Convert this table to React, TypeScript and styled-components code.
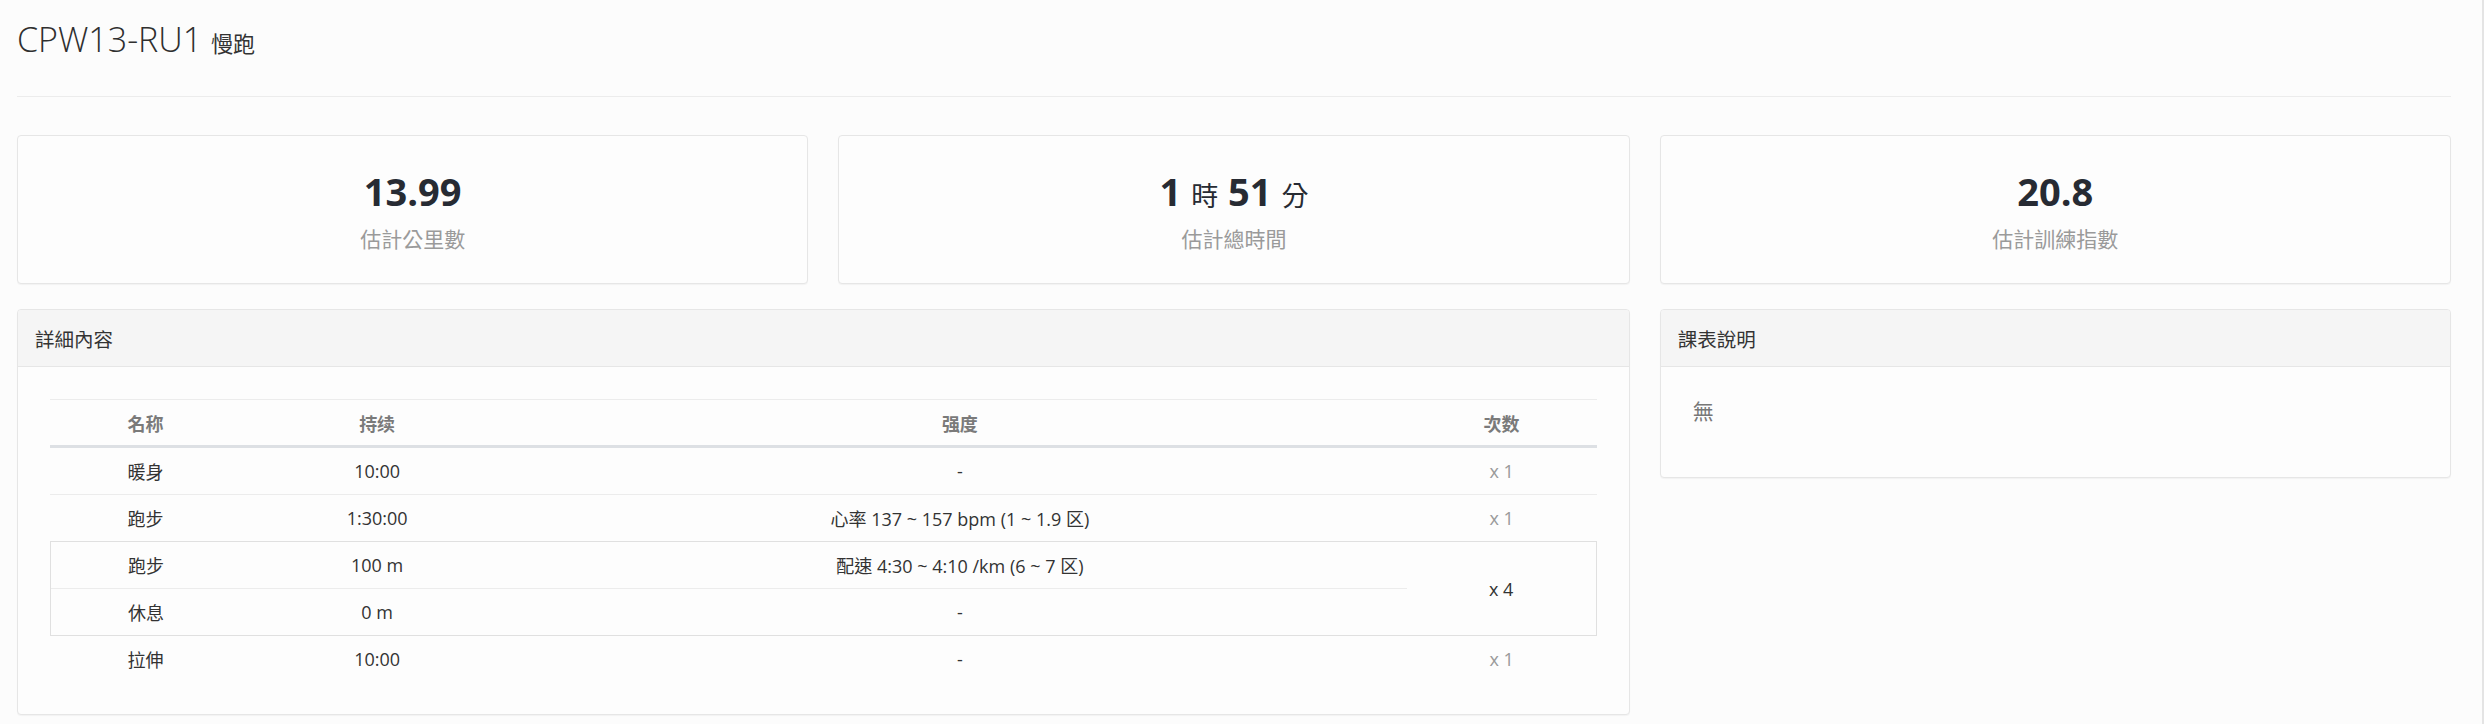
import React from 'react'
import styled, { createGlobalStyle } from 'styled-components'

const GlobalStyle = createGlobalStyle`
  html, body {
    margin: 0;
    background: #ffffff;
  }
  body {
    font-family: "Open Sans", "Noto Sans CJK TC", sans-serif;
    color: #333333;
  }
  * {
    box-sizing: border-box;
  }
`

interface Step {
  name: string
  duration: string
  intensity: string
}

interface Block {
  count: string
  steps: Step[]
}

const blocks: Block[] = [
  { count: 'x 1', steps: [{ name: '暖身', duration: '10:00', intensity: '-' }] },
  {
    count: 'x 1',
    steps: [{ name: '跑步', duration: '1:30:00', intensity: '心率 137 ~ 157 bpm (1 ~ 1.9 区)' }],
  },
  {
    count: 'x 4',
    steps: [
      { name: '跑步', duration: '100 m', intensity: '配速 4:30 ~ 4:10 /km (6 ~ 7 区)' },
      { name: '休息', duration: '0 m', intensity: '-' },
    ],
  },
  { count: 'x 1', steps: [{ name: '拉伸', duration: '10:00', intensity: '-' }] },
]

const App: React.FC = () => {
  return (
    <>
      <GlobalStyle />
      <Page>
        <TitleBar>
          <Title>
            CPW13-RU1 <TitleSub>慢跑</TitleSub>
          </Title>
        </TitleBar>

        <Grid>
          <StatCard>
            <StatValue>13.99</StatValue>
            <StatLabel>估計公里數</StatLabel>
          </StatCard>
          <StatCard>
            <StatValue>
              1 <StatUnit>時</StatUnit> 51 <StatUnit>分</StatUnit>
            </StatValue>
            <StatLabel>估計總時間</StatLabel>
          </StatCard>
          <StatCard>
            <StatValue>20.8</StatValue>
            <StatLabel>估計訓練指數</StatLabel>
          </StatCard>

          <Panel span={2}>
            <PanelHeading>詳細內容</PanelHeading>
            <PanelBody>
              <Table>
                <HeadRow>
                  <HeadCell>名称</HeadCell>
                  <HeadCell>持续</HeadCell>
                  <HeadCell>强度</HeadCell>
                  <HeadCell>次数</HeadCell>
                </HeadRow>
                {blocks.map((block, i) => {
                  const next = blocks[i + 1]
                  if (block.steps.length > 1) {
                    return (
                      <RepeatGroup key={i}>
                        {block.steps.map((step, j) => (
                          <GroupStep key={j} divider={j < block.steps.length - 1} style={{ gridRow: j + 1 }}>
                            <Cell>{step.name}</Cell>
                            <Cell>{step.duration}</Cell>
                            <Cell>{step.intensity}</Cell>
                          </GroupStep>
                        ))}
                        <CountCell strong style={{ gridRow: `1 / span ${block.steps.length}` }}>
                          {block.count}
                        </CountCell>
                      </RepeatGroup>
                    )
                  }
                  const step = block.steps[0]
                  return (
                    <BodyRow key={i} divider={!!next && next.steps.length === 1}>
                      <Cell>{step.name}</Cell>
                      <Cell>{step.duration}</Cell>
                      <Cell>{step.intensity}</Cell>
                      <CountCell>{block.count}</CountCell>
                    </BodyRow>
                  )
                })}
              </Table>
            </PanelBody>
          </Panel>

          <Panel>
            <PanelHeading>課表說明</PanelHeading>
            <NoteBody>
              <NoteText>無</NoteText>
            </NoteBody>
          </Panel>
        </Grid>
      </Page>
    </>
  )
}

const Page = styled.div`
  width: 2484px;
  min-height: 100vh;
  padding: 0 31px 0 17px;
  background: #fcfcfc;
  border-right: 2px solid #e4e4e4;
`

const TitleBar = styled.div`
  padding: 20px 0 37px;
  border-bottom: 1px solid #ececec;
  margin-bottom: 38px;
`

const Title = styled.h1`
  margin: 0;
  font-size: 34px;
  line-height: 39px;
  font-weight: 300;
  color: #2f2f2f;
`

const TitleSub = styled.small`
  font-size: 22px;
  line-height: 1;
  font-weight: 400;
  color: #333333;
`

const Grid = styled.div`
  display: grid;
  grid-template-columns: repeat(3, 1fr);
  column-gap: 30px;
  row-gap: 25px;
  align-items: start;
`

const StatCard = styled.div`
  display: flex;
  flex-direction: column;
  align-items: center;
  padding: 34px 15px 28px;
  background: #fdfdfd;
  border: 1px solid #e6e6e6;
  border-radius: 4px;
  box-shadow: 0 1px 1px rgba(0, 0, 0, 0.04);
`

const StatValue = styled.div`
  height: 42px;
  font-size: 38px;
  line-height: 42px;
  font-weight: 700;
  color: #272b33;
`

const StatUnit = styled.span`
  font-size: 27px;
  line-height: 1;
  font-weight: 400;
`

const StatLabel = styled.div`
  margin-top: 12px;
  font-size: 21px;
  line-height: 31px;
  color: #9a9a9a;
`

const Panel = styled.div<{ span?: number }>`
  grid-column: span ${(p) => p.span || 1};
  background: #fdfdfd;
  border: 1px solid #e6e6e6;
  border-radius: 4px;
  box-shadow: 0 1px 1px rgba(0, 0, 0, 0.04);
  overflow: hidden;
`

const PanelHeading = styled.div`
  display: flex;
  align-items: center;
  height: 57px;
  padding: 0 17px;
  background: #f5f5f5;
  border-bottom: 1px solid #e6e6e6;
  font-size: 19.5px;
  color: #333333;
`

const PanelBody = styled.div`
  padding: 32px;
`

const Table = styled.div`
  display: grid;
  grid-template-columns: 191fr 272fr 893fr 190fr;
  border-top: 1px solid #ececec;
  font-size: 18px;
`

const HeadRow = styled.div`
  display: grid;
  grid-column: 1 / -1;
  grid-template-columns: subgrid;
  border-bottom: 3px solid #dde0e4;
`

const HeadCell = styled.div`
  display: flex;
  align-items: center;
  justify-content: center;
  height: 45px;
  font-weight: 700;
  color: #7a7a7a;
`

const BodyRow = styled.div<{ divider?: boolean }>`
  display: grid;
  grid-column: 1 / -1;
  grid-template-columns: subgrid;
  border-bottom: ${(p) => (p.divider ? '1px solid #ececec' : 'none')};
`

const RepeatGroup = styled.div`
  display: grid;
  grid-column: 1 / -1;
  grid-template-columns: subgrid;
  border: 1px solid #e0e0e0;
`

const GroupStep = styled.div<{ divider?: boolean }>`
  display: grid;
  grid-column: 1 / 4;
  grid-template-columns: subgrid;
  border-bottom: ${(p) => (p.divider ? '1px solid #ececec' : 'none')};
`

const Cell = styled.div`
  display: flex;
  align-items: center;
  justify-content: center;
  height: 46px;
  color: #333333;
  white-space: nowrap;
`

const CountCell = styled(Cell)<{ strong?: boolean }>`
  grid-column: 4;
  height: auto;
  min-height: 46px;
  color: ${(p) => (p.strong ? '#333333' : '#9a9a9a')};
`

const NoteBody = styled.div`
  padding: 29px 32px 32px;
`

const NoteText = styled.p`
  margin: 0 0 18px;
  font-size: 21px;
  line-height: 31px;
  color: #777777;
`

export default App
